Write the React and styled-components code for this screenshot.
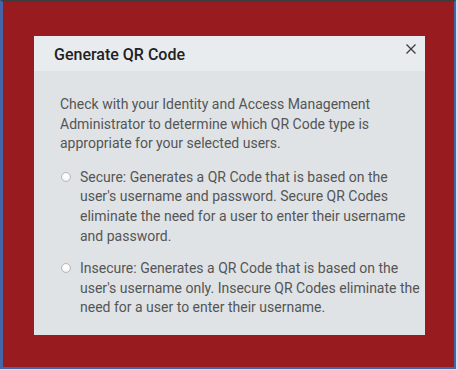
import styled, { createGlobalStyle } from "styled-components";

const GlobalStyle = createGlobalStyle`
  html, body {
    margin: 0;
    padding: 0;
    background: #d6e2f2;
  }
  * {
    box-sizing: border-box;
  }
`;

const Frame = styled.div`
  width: 456px;
  height: 369px;
  background: #981c1f;
  border-top: 2px solid #3d3d3d;
  border-left: 3px solid #4466a6;
  border-right: 2px solid #4466a6;
  border-bottom: 2px solid #4466a6;
  padding: 34px 0 0 31px;
`;

const Modal = styled.div`
  width: 391px;
  background: #dfe3e6;
  font-family: Roboto, "Liberation Sans", sans-serif;
`;

const Header = styled.div`
  height: 35px;
  background: #e9ecef;
  display: flex;
  align-items: center;
  justify-content: space-between;
  padding: 0 8px 0 20px;
`;

const Title = styled.h2`
  margin: 0;
  font-size: 16px;
  font-weight: 500;
  color: #222;
  padding-top: 1px;
`;

const Close = styled.button`
  border: 0;
  background: none;
  padding: 0;
  width: 12px;
  height: 12px;
  margin-top: -9px;
  display: flex;
  align-items: center;
  justify-content: center;
  color: #3c3c3c;
  cursor: pointer;
`;

const Body = styled.div`
  padding: 24px 4px 17px 26px;
  font-size: 14px;
  line-height: 19.6px;
  color: #555;
`;

const Text = styled.p`
  margin: 0 30px 14px 0;
`;

const Option = styled.label`
  display: flex;
  align-items: flex-start;
  margin: 0 0 ${(p) => (p.$last ? "0" : "13px")} 1px;
`;

const Radio = styled.span`
  flex: none;
  width: 10px;
  height: 10px;
  margin: 4px 9px 0 0;
  border-radius: 50%;
  border: 1px solid #b9b9b9;
  background: radial-gradient(circle at 50% 40%, #ffffff 30%, #e4e4e4 100%);
`;

const App = () => {
  return (
    <>
      <GlobalStyle />
      <Frame>
        <Modal>
          <Header>
            <Title>Generate QR Code</Title>
            <Close aria-label="Close">
              <svg width="10" height="10" viewBox="0 0 10 10">
                <path d="M0.5 0.5 L9.5 9.5 M9.5 0.5 L0.5 9.5" stroke="currentColor" strokeWidth="1.3" />
              </svg>
            </Close>
          </Header>
          <Body>
            <Text>
              Check with your Identity and Access Management Administrator to
              determine which QR Code type is appropriate for your selected users.
            </Text>
            <Option>
              <Radio />
              <span>
                Secure: Generates a QR Code that is based on the user's username
                and password. Secure QR Codes eliminate the need for a user to
                enter their username and password.
              </span>
            </Option>
            <Option $last>
              <Radio />
              <span>
                Insecure: Generates a QR Code that is based on the user's username
                only. Insecure QR Codes eliminate the need for a user to enter
                their username.
              </span>
            </Option>
          </Body>
        </Modal>
      </Frame>
    </>
  );
};

export default App;
